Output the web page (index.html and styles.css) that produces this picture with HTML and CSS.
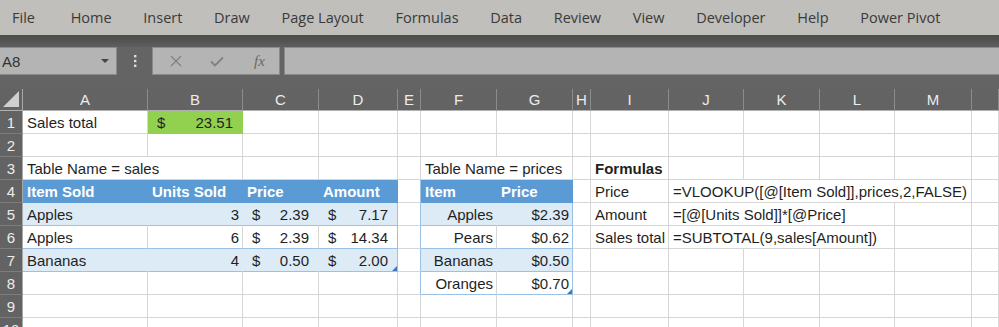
FILE: index.html
```html
<!DOCTYPE html>
<html lang="en">
<head>
    <meta charset="UTF-8">
    <title>Sales workbook</title>
    <link rel="stylesheet" href="styles.css">
</head>
<body>
    <nav class="ribbon">
        <span>File</span><span>Home</span><span>Insert</span><span>Draw</span><span>Page Layout</span><span>Formulas</span><span>Data</span><span>Review</span><span>View</span><span>Developer</span><span>Help</span><span>Power Pivot</span>
    </nav>
    <div class="strip"></div>

    <!-- formula bar -->
    <div class="fbar">
        <div class="namebox">
            <span>A8</span>
            <svg width="8" height="5" viewBox="0 0 8 5"><path d="M0 0h8L4 4z" fill="#444"/></svg>
        </div>
        <div class="grip">
            <svg width="4" height="14" viewBox="0 0 4 14"><rect x="1" y="1" width="2.4" height="2.4" fill="#ddd"/><rect x="1" y="5.8" width="2.4" height="2.4" fill="#ddd"/><rect x="1" y="10.6" width="2.4" height="2.4" fill="#ddd"/></svg>
        </div>
        <div class="fxbox">
            <svg class="ico" width="12" height="12" viewBox="0 0 12 12"><path d="M1 1l10 10M11 1L1 11" stroke="#818181" stroke-width="1.3"/></svg>
            <svg class="ico" width="14" height="11" viewBox="0 0 14 11"><path d="M1 5.5l4 4L13 1.5" stroke="#818181" stroke-width="1.8" fill="none"/></svg>
            <i class="fx">fx</i>
        </div>
        <div class="finput"></div>
    </div>
    <div class="gap"></div>

    <div class="sheet">
        <div class="ch corner"><svg width="16" height="16" viewBox="0 0 16 16"><path d="M16 0v16H0z" fill="#cfcfcf"/></svg></div>
        <div class="ch">A</div><div class="ch">B</div><div class="ch">C</div><div class="ch">D</div><div class="ch">E</div><div class="ch">F</div><div class="ch">G</div><div class="ch">H</div><div class="ch">I</div><div class="ch">J</div><div class="ch">K</div><div class="ch">L</div><div class="ch">M</div><div class="ch"></div>

        <!-- row 1 -->
        <div class="rh">1</div>
        <div class="c">Sales total</div>
        <div class="c acct grn"><span>$</span><span>23.51</span></div>
        <div class="c"></div><div class="c"></div><div class="c"></div><div class="c"></div><div class="c"></div><div class="c"></div><div class="c"></div><div class="c"></div><div class="c"></div><div class="c"></div><div class="c"></div><div class="c"></div>

        <!-- row 2 -->
        <div class="rh">2</div>
        <div class="c"></div><div class="c"></div><div class="c"></div><div class="c"></div><div class="c"></div><div class="c"></div><div class="c"></div><div class="c"></div><div class="c"></div><div class="c"></div><div class="c"></div><div class="c"></div><div class="c"></div><div class="c"></div>

        <!-- row 3 -->
        <div class="rh">3</div>
        <div class="c s2">Table Name = sales</div>
        <div class="c"></div><div class="c"></div><div class="c"></div>
        <div class="c s2">Table Name = prices</div>
        <div class="c"></div>
        <div class="c b">Formulas</div>
        <div class="c"></div><div class="c"></div><div class="c"></div><div class="c"></div><div class="c"></div>

        <!-- row 4 -->
        <div class="rh">4</div>
        <div class="c th">Item Sold</div><div class="c th">Units Sold</div><div class="c th">Price</div><div class="c th">Amount</div>
        <div class="c edge"></div>
        <div class="c th">Item</div><div class="c th">Price</div>
        <div class="c"></div>
        <div class="c">Price</div>
        <div class="c s4">=VLOOKUP([@[Item Sold]],prices,2,FALSE)</div>
        <div class="c"></div>

        <!-- row 5 -->
        <div class="rh">5</div>
        <div class="c band">Apples</div>
        <div class="c band r">3</div>
        <div class="c band acct"><span>$</span><span>2.39</span></div>
        <div class="c band acct last"><span>$</span><span>7.17</span></div>
        <div class="c edge"></div>
        <div class="c band r">Apples</div>
        <div class="c band r last">$2.39</div>
        <div class="c"></div>
        <div class="c">Amount</div>
        <div class="c s3">=[@[Units Sold]]*[@Price]</div>
        <div class="c"></div><div class="c"></div>

        <!-- row 6 -->
        <div class="rh">6</div>
        <div class="c tw">Apples</div>
        <div class="c tw r">6</div>
        <div class="c tw acct"><span>$</span><span>2.39</span></div>
        <div class="c tw acct last"><span>$</span><span>14.34</span></div>
        <div class="c edge"></div>
        <div class="c tw r">Pears</div>
        <div class="c tw r last">$0.62</div>
        <div class="c"></div>
        <div class="c">Sales total</div>
        <div class="c s3">=SUBTOTAL(9,sales[Amount])</div>
        <div class="c"></div><div class="c"></div>

        <!-- row 7 -->
        <div class="rh">7</div>
        <div class="c band">Bananas</div>
        <div class="c band r">4</div>
        <div class="c band acct"><span>$</span><span>0.50</span></div>
        <div class="c band acct last handle"><span>$</span><span>2.00</span></div>
        <div class="c edge"></div>
        <div class="c band r">Bananas</div>
        <div class="c band r last">$0.50</div>
        <div class="c"></div><div class="c"></div><div class="c"></div><div class="c"></div><div class="c"></div><div class="c"></div><div class="c"></div>

        <!-- row 8 -->
        <div class="rh">8</div>
        <div class="c"></div><div class="c"></div><div class="c"></div><div class="c"></div>
        <div class="c edge"></div>
        <div class="c tw r">Oranges</div>
        <div class="c tw r last handle">$0.70</div>
        <div class="c"></div><div class="c"></div><div class="c"></div><div class="c"></div><div class="c"></div><div class="c"></div><div class="c"></div>

        <!-- row 9 -->
        <div class="rh">9</div>
        <div class="c"></div><div class="c"></div><div class="c"></div><div class="c"></div><div class="c"></div><div class="c"></div><div class="c"></div><div class="c"></div><div class="c"></div><div class="c"></div><div class="c"></div><div class="c"></div><div class="c"></div><div class="c"></div>

        <!-- row 10 -->
        <div class="rh">10</div>
        <div class="c"></div><div class="c"></div><div class="c"></div><div class="c"></div><div class="c"></div><div class="c"></div><div class="c"></div><div class="c"></div><div class="c"></div><div class="c"></div><div class="c"></div><div class="c"></div><div class="c"></div><div class="c"></div>
    </div>
</body>
</html>
```

FILE: styles.css
```css
body {
    margin: 0;
    width: 999px;
    height: 327px;
    overflow: hidden;
    background-color: #646464;
    font-family: "Liberation Sans", Arial, sans-serif;
}
.ribbon {
    height: 35px;
    background-color: #c0bfbb;
    display: flex;
    align-items: center;
    gap: 31.7px;
    padding-left: 12px;
    font-family: "Open Sans", sans-serif;
    font-size: 14.5px;
    color: #3a3a3a;
}
.ribbon span:first-child {
    margin-right: 4px;
}
.strip {
    height: 12px;
    background: linear-gradient(#4b4b4b, #5e5e5e);
}
.fbar {
    height: 29px;
    display: flex;
    align-items: flex-start;
}
.namebox, .fxbox, .finput {
    height: 28px;
    box-sizing: border-box;
    background-color: #b4b4b4;
    border: 1px solid #8a8a8a;
}
.namebox {
    width: 117px;
    border-left: none;
    display: flex;
    align-items: center;
    justify-content: space-between;
    padding: 0 7px 0 2px;
    font-size: 15px;
    color: #333;
}
.grip {
    width: 35px;
    height: 28px;
    display: flex;
    align-items: center;
    justify-content: center;
}
.fxbox {
    width: 128px;
    display: flex;
    align-items: center;
    padding-left: 17px;
}
.fxbox .ico {
    margin-right: 28px;
}
.fx {
    font-family: "Liberation Serif", serif;
    font-size: 15px;
    color: #6a6a6a;
    margin-left: 2px;
}
.finput {
    flex: 1;
    margin-left: 4px;
    border-right: none;
}
.gap {
    height: 13px;
}
.sheet {
    display: grid;
    grid-template-columns: 23px 125px 95px 76px 79px 23px 76px 76px 18px 78px 75px 76px 75px 77px 27px;
    grid-template-rows: 22px;
    grid-auto-rows: 23px;
    background-color: #fff;
    font-size: 15px;
    color: #1f1f1f;
}
.ch {
    background-color: #636363;
    color: #ececec;
    text-align: center;
    line-height: 22px;
    border-right: 1px solid #8c8c8c;
    border-bottom: 1px solid #b0b0b0;
    box-sizing: border-box;
}
.corner {
    display: flex;
    align-items: flex-end;
    justify-content: flex-end;
    padding: 0 3px 3px 0;
    border-right-color: #a8a8a8;
}
.rh {
    background-color: #636363;
    color: #ececec;
    text-align: center;
    line-height: 24px;
    border-right: 1px solid #a8a8a8;
    border-bottom: 1px solid #7c7c7c;
    box-sizing: border-box;
}
.c {
    box-sizing: border-box;
    border-right: 1px solid #d6d6d6;
    border-bottom: 1px solid #d6d6d6;
    padding: 0 3px 0 4px;
    line-height: 24px;
    white-space: nowrap;
    overflow: visible;
    position: relative;
}
.s2 { grid-column: span 2; }
.s3 { grid-column: span 3; }
.s4 { grid-column: span 4; }
.r { text-align: right; }
.b { font-weight: bold; }
.acct {
    display: flex;
    justify-content: space-between;
    padding: 0 9px;
}
.grn {
    background-color: #92d050;
    border-color: #92d050;
}
.th {
    background-color: #5b9bd5;
    border-color: #5b9bd5;
    color: #fff;
    font-weight: bold;
}
.band {
    background-color: #ddebf7;
    border-right-color: #ddebf7;
    border-bottom-color: #9bc2e6;
}
.tw {
    border-bottom-color: #9bc2e6;
}
.last, .edge {
    border-right-color: #9bc2e6;
}
.handle::after {
    content: "";
    position: absolute;
    right: 0;
    bottom: 0;
    border-left: 5px solid transparent;
    border-bottom: 5px solid #3b78c2;
}
```
